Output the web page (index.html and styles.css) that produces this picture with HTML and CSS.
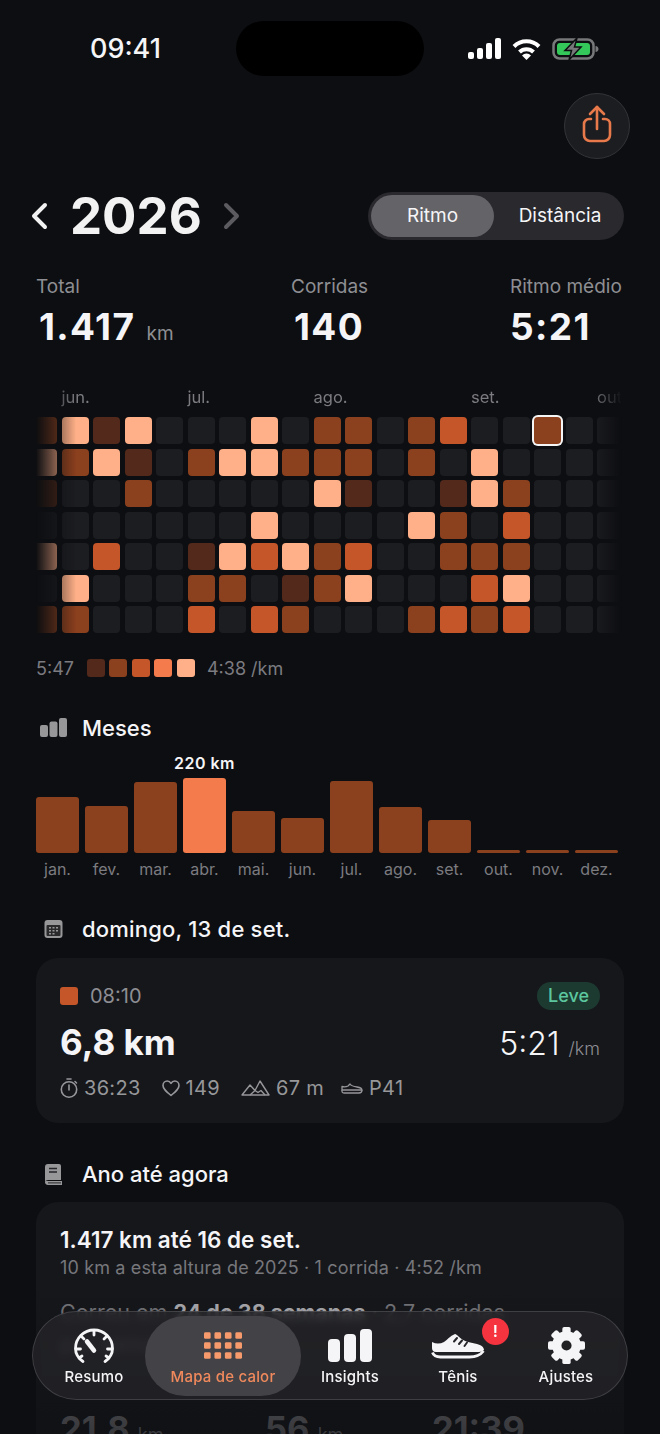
FILE: index.html
```html
<!DOCTYPE html>
<html lang="pt-BR">
<head>
    <meta charset="UTF-8">
    <meta name="viewport" content="width=device-width, initial-scale=1.0">
    <title>Mapa de calor</title>
    <link rel="stylesheet" href="styles.css">
</head>
<body>
<div class="screen">
    <!-- status bar -->
    <div class="status">
        <span class="clock">09:41</span>
        <div class="island"></div>
        <div class="status-icons">
            <svg width="33" height="22" viewBox="0 0 33 22" fill="#fff"><rect x="0" y="14" width="6" height="7" rx="2"/><rect x="9" y="10" width="6" height="11" rx="2"/><rect x="18" y="5" width="6" height="16" rx="2"/><rect x="27" y="0" width="6" height="21" rx="2"/></svg>
            <svg width="29" height="22" viewBox="0 0 29 22" fill="none" stroke="#fff" stroke-width="4"><path d="M2 8.500a17.500 17.500 0 0 1 25 0"/><path d="M7.500 14a10 10 0 0 1 14 0"/><path d="M14.500 22l-4.500-4.600a6.400 6.400 0 0 1 9 0z" fill="#fff" stroke="none"/></svg>
            <svg width="47" height="22" viewBox="0 0 47 22"><rect x="1.500" y="1.500" width="40" height="19" rx="6" fill="none" stroke="#77787a" stroke-width="2.500"/><rect x="5" y="5" width="33" height="12" rx="3" fill="#34c759"/><path d="M43.500 8v6c2 0 3-1.500 3-3s-1-3-3-3z" fill="#77787a"/><path d="M25 0L13 12.500h6.500L17 22l12-13h-6.500z" fill="#77787a" stroke="#0d0e11" stroke-width="1.500"/></svg>
        </div>
    </div>

    <div class="top-actions">
        <button class="share-btn">
            <svg width="30" height="38" viewBox="0 0 30 38" fill="none" stroke="#e8794b" stroke-width="2.600" stroke-linecap="round" stroke-linejoin="round"><path d="M9 14H7a5 5 0 0 0-5 5v11a6 6 0 0 0 6 6h14a6 6 0 0 0 6-6V19a5 5 0 0 0-5-5h-2"/><path d="M15 24V2"/><path d="M8 9l7-7 7 7"/></svg>
        </button>
    </div>

    <!-- year + mode -->
    <div class="year-row">
        <div class="year-nav">
            <svg class="chev" width="18" height="28" viewBox="0 0 18 28" fill="none" stroke="#f2f2f2" stroke-width="4" stroke-linecap="round" stroke-linejoin="round"><path d="M15 3L4 14l11 11"/></svg>
            <span class="year">2026</span>
            <svg class="chev" width="18" height="28" viewBox="0 0 18 28" fill="none" stroke="#5c5c60" stroke-width="4" stroke-linecap="round" stroke-linejoin="round"><path d="M3 3l11 11L3 25"/></svg>
        </div>
        <div class="segment">
            <span class="seg-item seg-on">Ritmo</span>
            <span class="seg-item seg-off">Distância</span>
        </div>
    </div>

    <div class="stats">
        <div>
            <div class="stat-label">Total</div>
            <div class="stat-value">1.417 <small>km</small></div>
        </div>
        <div>
            <div class="stat-label">Corridas</div>
            <div class="stat-value">140</div>
        </div>
        <div>
            <div class="stat-label">Ritmo médio</div>
            <div class="stat-value stat-pace">5:21</div>
        </div>
    </div>

    <!-- heat map -->
    <div class="heat">
        <div class="heat-months">
            <span class="hm-jun">jun.</span>
            <span class="hm-jul">jul.</span>
            <span class="hm-ago">ago.</span>
            <span class="hm-set">set.</span>
            <span class="hm-out">out.</span>
        </div>
        <div class="heat-grid">
            <i class="l2"></i><i class="l5"></i><i class="l1"></i><i class="l5"></i><i></i><i></i><i></i><i class="l5"></i><i></i><i class="l2"></i><i class="l2"></i><i></i><i class="l2"></i><i class="l3"></i><i></i><i></i><i class="l2 picked"></i><i></i><i></i>
            <i class="l5"></i><i class="l2"></i><i class="l5"></i><i class="l1"></i><i></i><i class="l2"></i><i class="l5"></i><i class="l5"></i><i class="l2"></i><i class="l2"></i><i class="l2"></i><i></i><i class="l2"></i><i></i><i class="l5"></i><i></i><i></i><i></i><i></i>
            <i class="l1"></i><i></i><i></i><i class="l2"></i><i></i><i></i><i></i><i></i><i></i><i class="l5"></i><i class="l1"></i><i></i><i></i><i class="l1"></i><i class="l5"></i><i class="l2"></i><i></i><i></i><i></i>
            <i></i><i></i><i></i><i></i><i></i><i></i><i></i><i class="l5"></i><i></i><i></i><i></i><i></i><i class="l5"></i><i class="l2"></i><i></i><i class="l3"></i><i></i><i></i><i></i>
            <i class="l5"></i><i></i><i class="l3"></i><i></i><i></i><i class="l1"></i><i class="l5"></i><i class="l3"></i><i class="l5"></i><i class="l2"></i><i class="l3"></i><i></i><i></i><i class="l2"></i><i class="l2"></i><i class="l2"></i><i></i><i></i><i></i>
            <i></i><i class="l5"></i><i></i><i></i><i></i><i class="l2"></i><i class="l2"></i><i></i><i class="l1"></i><i class="l2"></i><i class="l5"></i><i></i><i></i><i></i><i class="l3"></i><i class="l5"></i><i></i><i></i><i></i>
            <i class="l2"></i><i class="l2"></i><i></i><i></i><i></i><i class="l3"></i><i></i><i class="l3"></i><i class="l2"></i><i></i><i></i><i></i><i class="l2"></i><i class="l3"></i><i class="l2"></i><i class="l3"></i><i></i><i></i><i></i>
        </div>
    </div>

    <div class="legend">
        <span>5:47</span>
        <div class="legend-scale">
            <i class="l1"></i><i class="l2"></i><i class="l3"></i><i class="l4"></i><i class="l5"></i>
        </div>
        <span>4:38 /km</span>
    </div>

    <!-- months -->
    <div class="section-head meses-head">
        <svg class="sec-icon" width="27" height="20" viewBox="0 0 27 20" fill="#97979a"><rect x="0" y="7" width="8" height="12" rx="2"/><rect x="9.500" y="3.500" width="8" height="15.500" rx="2"/><rect x="19" y="0" width="8" height="19" rx="2"/></svg>
        <span>Meses</span>
    </div>
    <div class="bars">
        <div class="bar-col"><div class="bar bar-jan"></div></div>
        <div class="bar-col"><div class="bar bar-fev"></div></div>
        <div class="bar-col"><div class="bar bar-mar"></div></div>
        <div class="bar-col"><span class="bar-value">220 km</span><div class="bar bar-abr"></div></div>
        <div class="bar-col"><div class="bar bar-mai"></div></div>
        <div class="bar-col"><div class="bar bar-jun"></div></div>
        <div class="bar-col"><div class="bar bar-jul"></div></div>
        <div class="bar-col"><div class="bar bar-ago"></div></div>
        <div class="bar-col"><div class="bar bar-set"></div></div>
        <div class="bar-col"><div class="bar bar-none"></div></div>
        <div class="bar-col"><div class="bar bar-none"></div></div>
        <div class="bar-col"><div class="bar bar-none"></div></div>
    </div>
    <div class="bar-labels">
        <span>jan.</span><span>fev.</span><span>mar.</span><span>abr.</span><span>mai.</span><span>jun.</span><span>jul.</span><span>ago.</span><span>set.</span><span>out.</span><span>nov.</span><span>dez.</span>
    </div>

    <!-- selected run -->
    <div class="section-head day-head">
        <svg class="sec-icon" width="27" height="18" viewBox="0 0 27 18"><rect x="4.500" y="0" width="18" height="18" rx="3" fill="#97979a"/><rect x="6.500" y="5" width="14" height="11" rx="1" fill="#2a2a2d"/><g fill="#97979a"><rect x="9" y="7" width="2" height="1.500"/><rect x="12.500" y="7" width="2" height="1.500"/><rect x="16" y="7" width="2" height="1.500"/><rect x="9" y="10" width="2" height="1.500"/><rect x="12.500" y="10" width="2" height="1.500"/><rect x="16" y="10" width="2" height="1.500"/><rect x="9" y="13" width="2" height="1.500"/><rect x="12.500" y="13" width="2" height="1.500"/></g></svg>
        <span>domingo, 13 de set.</span>
    </div>
    <div class="card run-card">
        <div class="run-top">
            <div class="run-time"><i class="run-dot"></i>08:10</div>
            <span class="pill">Leve</span>
        </div>
        <div class="run-main">
            <span class="run-dist">6,8 km</span>
            <span class="run-pace">5:21 <small>/km</small></span>
        </div>
        <div class="run-meta">
            <span class="meta-item">
                <svg width="18" height="20" viewBox="0 0 18 20" fill="none" stroke="#97979a" stroke-width="1.600" stroke-linecap="round"><circle cx="9" cy="11.500" r="7.700"/><path d="M9 7v5M7 1h4M15 3.500l1.500 1.500"/></svg>
                36:23
            </span>
            <span class="meta-item">
                <svg width="18" height="17" viewBox="0 0 18 17" fill="none" stroke="#97979a" stroke-width="1.600" stroke-linejoin="round"><path d="M9 15.500C4 11.500 1 9 1 5.500 1 3 3 1 5.200 1 6.800 1 8.200 1.900 9 3.400 9.800 1.900 11.200 1 12.800 1 15 1 17 3 17 5.500 17 9 14 11.500 9 15.500z"/></svg>
                149
            </span>
            <span class="meta-item">
                <svg width="29" height="16" viewBox="0 0 29 16" fill="none" stroke="#97979a" stroke-width="1.400" stroke-linejoin="round"><path d="M1 15L9 5l5 5.500L19 1l9 14z"/><path d="M9 15l5-4.500 3 2 3-2 4 4.500"/></svg>
                67 m
            </span>
            <span class="meta-item meta-shoe">
                <svg width="22" height="11" viewBox="0 0 22 11" fill="none" stroke="#97979a" stroke-width="1.300" stroke-linejoin="round"><path d="M1 3.500c2 .5 4 .5 6-.5l2-2c1 1.500 3 2.500 7 3 3 .5 5 1.500 5 3H1z"/><path d="M1 7v1.500C1 9.500 2 10 3 10h15c2 0 3-1 3-3"/></svg>
                P41
            </span>
        </div>
    </div>

    <!-- year to date -->
    <div class="section-head ytd-head">
        <svg class="sec-icon" width="27" height="21" viewBox="0 0 27 21"><path d="M5 3a3 3 0 0 1 3-3h11a2 2 0 0 1 2 2v14H8a3 3 0 0 0-3 2z" fill="#97979a"/><path d="M5 17.500A3 3 0 0 1 8 17h14v4H8a3 3 0 0 1-3-3.500z" fill="#97979a"/><path d="M9 4.500h8M9 8h8" stroke="#26262a" stroke-width="1.600"/><path d="M8 18.900h13" stroke="#26262a" stroke-width="1"/></svg>
        <span>Ano até agora</span>
    </div>
    <div class="card ytd-card">
        <div class="ytd-title">1.417 km até 16 de set.</div>
        <div class="ytd-sub">10 km a esta altura de 2025 · 1 corrida · 4:52 /km</div>
        <p class="ytd-text">Correu em <b>24 de 38 semanas</b> · 2,7 corridas por semana</p>
        <div class="ytd-stats">
            <span class="ytd-num">21,8 <small>km</small></span>
            <span class="ytd-num">56 <small>km</small></span>
            <span class="ytd-num">21:39</span>
        </div>
    </div>

    <div class="bottom-fade"></div>

    <!-- tab bar -->
    <nav class="tabbar">
        <div class="tab">
            <svg width="40" height="36" viewBox="0 0 40 36" fill="none" stroke="#f5f5f7" stroke-linecap="round" stroke-width="2.800"><path d="M9 33.500C4 30 1.500 25.500 1.500 20.500 1.500 10 10 2 20 2s18.500 8 18.500 18.500c0 5-2.500 9.500-7.500 13"/><path d="M20 2.500v4.500M33 8l-3 3M7 8l3 3M38 21h-4.500M2 21h4.500M5 30l3-2M35 30l-3-2"/><path d="M13 13.500l7 9" stroke-width="4.500"/></svg>
            <span>Resumo</span>
        </div>
        <div class="tab tab-on">
            <svg width="38" height="27" viewBox="0 0 40 28" fill="#f79a6c"><rect x="0" y="0" width="7" height="7" rx="1.500"/><rect x="11" y="0" width="7" height="7" rx="1.500"/><rect x="22" y="0" width="7" height="7" rx="1.500"/><rect x="33" y="0" width="7" height="7" rx="1.500"/><rect x="0" y="10.500" width="7" height="7" rx="1.500"/><rect x="11" y="10.500" width="7" height="7" rx="1.500"/><rect x="22" y="10.500" width="7" height="7" rx="1.500"/><rect x="33" y="10.500" width="7" height="7" rx="1.500"/><rect x="0" y="21" width="7" height="7" rx="1.500"/><rect x="11" y="21" width="7" height="7" rx="1.500"/><rect x="22" y="21" width="7" height="7" rx="1.500"/><rect x="33" y="21" width="7" height="7" rx="1.500"/></svg>
            <span>Mapa de calor</span>
        </div>
        <div class="tab">
            <svg width="44" height="33" viewBox="0 0 44 33" fill="#f5f5f7"><rect x="0" y="10" width="12" height="23" rx="4"/><rect x="16" y="5" width="12" height="28" rx="4"/><rect x="32" y="0" width="12" height="33" rx="4"/></svg>
            <span>Insights</span>
        </div>
        <div class="tab">
            <svg width="54" height="26" viewBox="0 0 54 26"><path d="M1 9c4 2 8 2 12 0 3-2 6-6 11-8 1 0 2 1 3 2 3 3 6 5 10 6l9 2c4 1 7 3 7 6-1 1-3 2-5 2H5c-3 0-4-2-4-4z" fill="#f5f5f7"/><path d="M1.500 19.500c1 3 4 4.500 8 4.500h29c6 0 11-2 14-6" fill="none" stroke="#f5f5f7" stroke-width="2.800"/><path d="M26 5l-3 3.500M31 7.500l-3 3.500M36 9.500l-2.500 3.500" stroke="#26262a" stroke-width="2" stroke-linecap="round"/></svg>
            <em class="badge">!</em>
            <span>Tênis</span>
        </div>
        <div class="tab">
            <svg width="37" height="37" viewBox="-20 -20 40 40" fill="#f5f5f7"><circle r="10.500" fill="none" stroke="#f5f5f7" stroke-width="10"/><rect x="-4.500" y="-20" width="9" height="8" rx="2"/><rect x="-4.500" y="-20" width="9" height="8" rx="2" transform="rotate(45)"/><rect x="-4.500" y="-20" width="9" height="8" rx="2" transform="rotate(90)"/><rect x="-4.500" y="-20" width="9" height="8" rx="2" transform="rotate(135)"/><rect x="-4.500" y="-20" width="9" height="8" rx="2" transform="rotate(180)"/><rect x="-4.500" y="-20" width="9" height="8" rx="2" transform="rotate(225)"/><rect x="-4.500" y="-20" width="9" height="8" rx="2" transform="rotate(270)"/><rect x="-4.500" y="-20" width="9" height="8" rx="2" transform="rotate(315)"/></svg>
            <span>Ajustes</span>
        </div>
    </nav>
</div>
</body>
</html>
```

FILE: styles.css
```css
* {
    box-sizing: border-box;
}
body {
    margin: 0;
    background-color: #0d0e11;
    font-family: Inter, "Liberation Sans", sans-serif;
    color: #f5f5f7;
}
.screen {
    position: relative;
    width: 660px;
    height: 1434px;
    overflow: hidden;
}

/* status bar */
.status {
    display: flex;
    align-items: center;
    height: 76px;
    padding: 21px 61px 0 90px;
}
.clock {
    width: 72px;
    font-size: 27px;
    font-weight: 500;
}
.island {
    width: 188px;
    height: 55px;
    margin-left: 74px;
    border-radius: 28px;
    background-color: #000;
}
.status-icons {
    display: flex;
    align-items: center;
    gap: 11px;
    margin-left: auto;
}

.top-actions {
    display: flex;
    justify-content: flex-end;
    margin-top: 17px;
    padding-right: 30px;
}
.share-btn {
    display: flex;
    align-items: center;
    justify-content: center;
    width: 66px;
    height: 66px;
    padding: 0 0 4px;
    border: 1px solid #333438;
    border-radius: 50%;
    background-color: #1c1d21;
}

/* year */
.year-row {
    display: flex;
    align-items: center;
    justify-content: space-between;
    height: 48px;
    margin-top: 33px;
    padding: 0 36px 0 30px;
}
.year-nav {
    display: flex;
    align-items: center;
}
.year {
    margin: 0 21px 0 22px;
    font-size: 51px;
    font-weight: 700;
    line-height: 48px;
    color: #f2f2f2;
}
.segment {
    display: flex;
    align-items: center;
    width: 256px;
    height: 48px;
    padding: 3px;
    border-radius: 24px;
    background-color: #29292e;
}
.seg-item {
    flex: 1;
    font-size: 19px;
    line-height: 42px;
    text-align: center;
}
.seg-on {
    flex: 0 0 123px;
    border-radius: 21px;
    background-color: #636368;
}
.seg-off {
    padding-left: 5px;
}

.stats {
    display: grid;
    grid-template-columns: 255px 219px 1fr;
    margin-top: 36px;
    padding-left: 36px;
}
.stat-label {
    font-size: 19px;
    line-height: 22px;
    color: #8e8e93;
    white-space: nowrap;
}
.stat-value {
    margin-top: 9px;
    margin-left: 3px;
    font-size: 37px;
    font-weight: 700;
    line-height: 40px;
    letter-spacing: 1.400px;
    white-space: nowrap;
}
.stat-value small {
    margin-left: 1px;
    font-size: 19px;
    font-weight: 400;
    letter-spacing: 0;
    color: #8e8e93;
}
.stat-pace {
    margin-left: 0;
}

/* heat map */
.heat {
    margin: 33px 36px 0;
    overflow: hidden;
    -webkit-mask-image: linear-gradient(to right, transparent 0, #000 40px, #000 556px, transparent 586px);
    mask-image: linear-gradient(to right, transparent 0, #000 40px, #000 556px, transparent 586px);
}
.heat-months,
.heat-grid {
    display: grid;
    grid-template-columns: repeat(19, 27px);
    column-gap: 4.5px;
    width: 600px;
    margin-left: -6px;
}
.heat-months {
    height: 20px;
    font-size: 16.500px;
    line-height: 20px;
    color: #7b7b80;
    white-space: nowrap;
}
.heat-months span {
    grid-row: 1;
}
.hm-jun { grid-column: 2; }
.hm-jul { grid-column: 6; }
.hm-ago { grid-column: 10; }
.hm-set { grid-column: 15; }
.hm-out { grid-column: 19; }
.heat-grid {
    row-gap: 4.5px;
    margin-top: 8px;
    padding: 2px 0;
}
.heat-grid i {
    height: 27px;
    border-radius: 4px;
    background-color: #1c1d21;
}
.heat-grid .picked {
    box-shadow: 0 0 0 2px #f5f5f5;
}
.heat-grid .l1, .legend-scale .l1 { background-color: #52291a; }
.heat-grid .l2, .legend-scale .l2 { background-color: #8b401e; }
.heat-grid .l3, .legend-scale .l3 { background-color: #c4562a; }
.heat-grid .l4, .legend-scale .l4 { background-color: #f47c4c; }
.heat-grid .l5, .legend-scale .l5 { background-color: #ffb088; }

.legend {
    display: flex;
    align-items: center;
    height: 18px;
    margin-top: 24px;
    padding-left: 36px;
    font-size: 18px;
    color: #7b7b80;
}
.legend-scale {
    display: flex;
    gap: 4.5px;
    margin: 0 12px 0 13px;
}
.legend-scale i {
    width: 18px;
    height: 18px;
    border-radius: 3px;
}

/* section titles */
.section-head {
    display: flex;
    align-items: center;
    gap: 15px;
    height: 24px;
    padding-left: 40px;
    font-size: 22px;
    font-weight: 500;
}
.meses-head { margin-top: 39px; }
.day-head { margin-top: 38px; letter-spacing: .2px; }
.ytd-head { margin-top: 39px; }

/* month bars */
.bars {
    display: grid;
    grid-template-columns: repeat(12, 43px);
    column-gap: 6px;
    height: 113px;
    padding-left: 36px;
}
.bar-col {
    display: flex;
    flex-direction: column;
    justify-content: flex-end;
    align-items: center;
}
.bar {
    width: 43px;
    border-radius: 3px;
    background-color: #8b401e;
}
.bar-jan { height: 56px; }
.bar-fev { height: 47px; }
.bar-mar { height: 71px; }
.bar-abr { height: 75px; background-color: #f47c4c; }
.bar-mai { height: 42px; }
.bar-jun { height: 35px; }
.bar-jul { height: 72px; }
.bar-ago { height: 46px; }
.bar-set { height: 33px; }
.bar-none { height: 3px; }
.bar-value {
    margin-bottom: 6px;
    font-size: 16px;
    font-weight: 600;
    line-height: 18px;
    letter-spacing: .5px;
    white-space: nowrap;
}
.bar-labels {
    display: grid;
    grid-template-columns: repeat(12, 43px);
    column-gap: 6px;
    margin-top: 6px;
    padding-left: 36px;
    font-size: 16px;
    line-height: 20px;
    text-align: center;
    color: #7b7b80;
}

/* cards */
.card {
    margin: 17px 36px 0;
    padding: 0 24px;
    border-radius: 22px;
    background-color: #16171b;
}
.run-card {
    height: 165px;
    padding-top: 24px;
}
.run-top {
    display: flex;
    align-items: center;
    justify-content: space-between;
    height: 27px;
}
.run-time {
    display: flex;
    align-items: center;
    gap: 12px;
    font-size: 20px;
    color: #8e8e93;
}
.run-dot {
    width: 18px;
    height: 18px;
    border-radius: 3px;
    background-color: #c4562a;
}
.pill {
    width: 63px;
    border-radius: 14px;
    background-color: #1d3a31;
    font-size: 18px;
    font-weight: 500;
    line-height: 28px;
    text-align: center;
    color: #5cc79f;
}
.run-main {
    display: flex;
    align-items: baseline;
    justify-content: space-between;
    margin-top: 12px;
}
.run-dist {
    font-size: 35px;
    font-weight: 700;
    line-height: 42px;
}
.run-pace {
    font-size: 32px;
    font-weight: 300;
}
.run-pace small {
    font-size: 18px;
    color: #8e8e93;
}
.run-meta {
    display: flex;
    align-items: center;
    gap: 21px;
    margin-top: 13px;
    font-size: 20px;
    letter-spacing: .3px;
    color: #97979a;
}
.meta-item {
    display: flex;
    align-items: center;
    gap: 6px;
}
.meta-shoe {
    margin-left: -4px;
}

.ytd-card {
    height: 320px;
    margin-top: 16px;
    padding-top: 25px;
}
.ytd-title {
    font-size: 22.500px;
    font-weight: 600;
    line-height: 26px;
}
.ytd-sub {
    margin-top: 4px;
    font-size: 18px;
    line-height: 22px;
    letter-spacing: .15px;
    color: #77777c;
}
.ytd-text {
    width: 470px;
    margin: 17px 0 0;
    font-size: 21.500px;
    line-height: 32px;
    color: #77777c;
}
.ytd-text b {
    font-weight: 700;
    color: #b0b0b4;
}
.ytd-stats {
    display: grid;
    grid-template-columns: 205px 167px 1fr;
    margin-top: 47px;
}
.ytd-num {
    font-size: 34.500px;
    font-weight: 700;
    line-height: 44px;
    color: #77777c;
}
.ytd-num small {
    font-size: 18px;
    font-weight: 400;
}

/* overlays at the bottom */
.bottom-fade {
    position: absolute;
    left: 0;
    right: 0;
    bottom: 0;
    height: 150px;
    background: linear-gradient(to bottom, rgba(13, 14, 17, 0), rgba(13, 14, 17, .6));
}
.tabbar {
    position: absolute;
    left: 32px;
    top: 1311px;
    display: grid;
    grid-template-columns: 102px 156px 98px 118px 98px;
    width: 596px;
    height: 89px;
    padding: 4px 12px 3px 10px;
    border: 1px solid rgba(255, 255, 255, .14);
    border-radius: 45px;
    background-color: rgba(36, 36, 40, .8);
    -webkit-backdrop-filter: blur(4px);
    backdrop-filter: blur(4px);
}
.tab {
    position: relative;
    display: flex;
    flex-direction: column;
    align-items: center;
    padding: 7px 0 10px;
    font-size: 15px;
    font-weight: 500;
    line-height: 18px;
    letter-spacing: .2px;
}
.tab svg {
    flex: none;
    margin: auto 0;
}
.tab-on {
    border-radius: 40px;
    background-color: #434347;
    color: #f0895c;
}
.badge {
    position: absolute;
    top: 2px;
    left: 83px;
    width: 27px;
    height: 27px;
    border-radius: 50%;
    background-color: #f5343f;
    font-size: 16px;
    font-style: normal;
    font-weight: 600;
    line-height: 27px;
    text-align: center;
    color: #fff;
}
```
